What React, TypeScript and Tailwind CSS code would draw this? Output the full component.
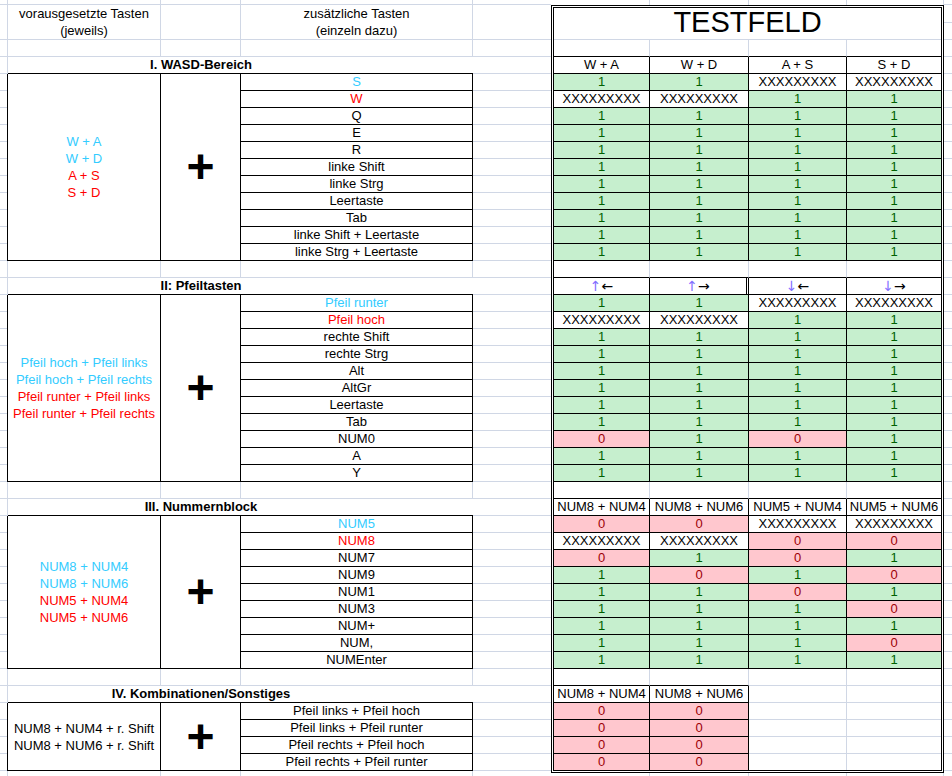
import type { ReactNode } from 'react';

type Tone = 'b' | 'r' | 'k';
type Line = [string, Tone?];

interface Section {
  title: string;
  combos: Line[];
  keys: Line[];
  heads: ReactNode[];
  values: string[];
  double?: number;
}

const tone: Record<Tone, string> = {
  b: 'text-[#33ccff]',
  r: 'text-[#ff0000]',
  k: 'text-black',
};

const fill: Record<string, string> = {
  '1': 'bg-[#c6efce] text-[#006100]',
  '0': 'bg-[#ffc7ce] text-[#9c0006]',
  X: 'bg-white text-black',
};

// spreadsheet lines
const G_R = 'border-r border-r-[#d0d7e5]';
const G_B = 'border-b border-b-[#d0d7e5]';
const K_R = 'border-r border-r-black';
const K_B = 'border-b border-b-black';

const COLS = ['w-[96px]', 'w-[99px]', 'w-[98px]', 'w-[94px]'];

const Arrows = ({ v, h }: { v: string; h: string }) => (
  <span className="font-['DejaVu_Sans',sans-serif] text-[14px]">
    <span className="text-[#8470ff]">{v}</span>
    {h}
  </span>
);

const allOnes = (n: number) => Array.from({ length: n }, () => '1111');

const sections: Section[] = [
  {
    title: 'I. WASD-Bereich',
    combos: [['W + A', 'b'], ['W + D', 'b'], ['A + S', 'r'], ['S + D', 'r']],
    keys: [
      ['S', 'b'], ['W', 'r'], ['Q'], ['E'], ['R'], ['linke Shift'], ['linke Strg'],
      ['Leertaste'], ['Tab'], ['linke Shift + Leertaste'], ['linke Strg + Leertaste'],
    ],
    heads: ['W + A', 'W + D', 'A + S', 'S + D'],
    values: ['11XX', 'XX11', ...allOnes(9)],
  },
  {
    title: 'II: Pfeiltasten',
    combos: [
      ['Pfeil hoch + Pfeil links', 'b'],
      ['Pfeil hoch + Pfeil rechts', 'b'],
      ['Pfeil runter + Pfeil links', 'r'],
      ['Pfeil runter + Pfeil rechts', 'r'],
    ],
    keys: [
      ['Pfeil runter', 'b'], ['Pfeil hoch', 'r'], ['rechte Shift'], ['rechte Strg'], ['Alt'],
      ['AltGr'], ['Leertaste'], ['Tab'], ['NUM0'], ['A'], ['Y'],
    ],
    heads: [
      <Arrows v="↑" h="←" />,
      <Arrows v="↑" h="→" />,
      <Arrows v="↓" h="←" />,
      <Arrows v="↓" h="→" />,
    ],
    values: ['11XX', 'XX11', ...allOnes(6), '0101', '1111', '1111'],
    double: 1,
  },
  {
    title: 'III. Nummernblock',
    combos: [['NUM8 + NUM4', 'b'], ['NUM8 + NUM6', 'b'], ['NUM5 + NUM4', 'r'], ['NUM5 + NUM6', 'r']],
    keys: [
      ['NUM5', 'b'], ['NUM8', 'r'], ['NUM7'], ['NUM9'], ['NUM1'], ['NUM3'], ['NUM+'], ['NUM,'], ['NUMEnter'],
    ],
    heads: ['NUM8 + NUM4', 'NUM8 + NUM6', 'NUM5 + NUM4', 'NUM5 + NUM6'],
    values: ['00XX', 'XX00', '0101', '1010', '1101', '1110', '1111', '1110', '1111'],
  },
  {
    title: 'IV. Kombinationen/Sonstiges',
    combos: [['NUM8 + NUM4 + r. Shift'], ['NUM8 + NUM6 + r. Shift']],
    keys: [
      ['Pfeil links + Pfeil hoch'], ['Pfeil links + Pfeil runter'],
      ['Pfeil rechts + Pfeil hoch'], ['Pfeil rechts + Pfeil runter'],
    ],
    heads: ['NUM8 + NUM4', 'NUM8 + NUM6'],
    values: ['00', '00', '00', '00'],
  },
];

function LeftPlain({ h, bottom = true }: { h: string; bottom?: boolean }) {
  const b = bottom ? G_B : '';
  return (
    <div className={`flex ${h}`}>
      <div className={`w-[8px] ${G_R} ${b}`} />
      <div className={`w-[153px] ${G_R} ${b}`} />
      <div className={`w-[80px] ${G_R} ${b}`} />
      <div className={`w-[232px] ${G_R} ${b}`} />
      <div className={`w-[78px] ${b}`} />
    </div>
  );
}

function BoxPlain({ h }: { h: string }) {
  return (
    <div className={`flex ${h}`}>
      <div className={`w-[99px] ${G_R}`} />
      <div className={`w-[99px] ${G_R}`} />
      <div className={`w-[98px] ${G_R}`} />
      <div className={`w-[97px] ${G_R}`} />
    </div>
  );
}

function LeftSection({ sec }: { sec: Section }) {
  return (
    <>
      <LeftPlain h="h-[17px]" />
      <div className="flex h-[17px]">
        <div className={`w-[8px] ${G_R} ${G_B}`} />
        <div className={`w-[465px] ${K_B}`}>
          <div className="w-[386px] whitespace-nowrap text-center font-bold leading-[16px]">{sec.title}</div>
        </div>
        <div className={`w-[78px] ${G_B}`} />
      </div>
      <div className="flex">
        <div className={`w-[8px] ${K_R}`}>
          {sec.keys.map((_, i) => (
            <div key={i} className={`h-[17px] ${G_B}`} />
          ))}
        </div>
        <div className={`flex w-[153px] flex-col items-center justify-center leading-[17px] ${K_R} ${K_B}`}>
          {sec.combos.map(([t, c = 'k'], i) => (
            <div key={i} className={`whitespace-nowrap ${tone[c]}`}>{t}</div>
          ))}
        </div>
        <div className={`flex w-[80px] items-center justify-center ${K_R} ${K_B}`}>
          <span className="text-[48px] font-bold leading-none">+</span>
        </div>
        <div className="w-[232px]">
          {sec.keys.map(([t, c = 'k'], i) => (
            <div key={i} className={`h-[17px] text-center leading-[16px] ${K_R} ${K_B} ${tone[c]}`}>{t}</div>
          ))}
        </div>
        <div className="w-[78px]">
          {sec.keys.map((_, i) => (
            <div key={i} className={`h-[17px] ${G_B}`} />
          ))}
        </div>
      </div>
    </>
  );
}

function BoxSection({ sec, last }: { sec: Section; last: boolean }) {
  const n = sec.heads.length;
  return (
    <>
      <div className="flex h-[17px]">
        {COLS.map((w, i) => (
          <div key={i} className={`${w} ${i < 3 ? G_R : ''} ${i < n ? K_B : G_B}`} />
        ))}
      </div>
      <div className="flex h-[17px]">
        {COLS.map((w, i) => {
          const head = i < n;
          let right = head ? K_R : G_R;
          if (sec.double === i) right = 'border-r-[3px] border-double border-r-black';
          if (i === 3) right = '';
          return (
            <div key={i} className={`${w} ${right} ${head ? K_B : G_B} whitespace-nowrap text-center leading-[16px]`}>
              {sec.heads[i]}
            </div>
          );
        })}
      </div>
      {sec.values.map((row, r) => {
        const end = last && r === sec.values.length - 1;
        return (
          <div key={r} className={`flex ${end ? 'h-[16px]' : 'h-[17px]'}`}>
            {COLS.map((w, i) => {
              const v = row[i];
              const right = i === 3 ? '' : v ? K_R : G_R;
              const bottom = end ? '' : v ? K_B : G_B;
              return (
                <div key={i} className={`${w} ${right} ${bottom} ${v ? fill[v] : ''} text-center leading-[16px]`}>
                  {v === 'X' ? 'XXXXXXXXX' : v}
                </div>
              );
            })}
          </div>
        );
      })}
    </>
  );
}

export default function App() {
  return (
    <div className="flex h-[776px] w-[952px] overflow-hidden bg-white font-['Liberation_Sans',Arial,sans-serif] text-[13px] text-black">
      <div className="w-[551px] shrink-0">
        <LeftPlain h="h-[5px]" />
        <div className="flex h-[35px]">
          <div className={`w-[8px] ${G_R} ${G_B}`} />
          <div className={`w-[153px] text-center leading-[17px] ${G_R} ${G_B}`}>
            vorausgesetzte Tasten
            <br />
            (jeweils)
          </div>
          <div className={`w-[80px] ${G_R} ${G_B}`} />
          <div className={`w-[232px] text-center leading-[17px] ${G_R} ${G_B}`}>
            zusätzliche Tasten
            <br />
            (einzeln dazu)
          </div>
          <div className={`w-[78px] ${G_B}`} />
        </div>
        {sections.map((s) => (
          <LeftSection key={s.title} sec={s} />
        ))}
        <LeftPlain h="h-[6px]" bottom={false} />
      </div>

      <div className="w-[393px] shrink-0">
        <BoxPlain h="h-[5px]" />
        <div className="w-[393px] border-[3px] border-double border-black">
          <div className={`flex h-[32px] items-center justify-center ${G_B}`}>
            <span className="pb-[3px] text-[29px] leading-none">TESTFELD</span>
          </div>
          {sections.map((s, i) => (
            <BoxSection key={s.title} sec={s} last={i === sections.length - 1} />
          ))}
        </div>
        <BoxPlain h="h-[4px]" />
      </div>

      <div className="w-[8px] shrink-0">
        <div className={`h-[5px] ${G_B}`} />
        <div className={`h-[18px] ${G_B}`} />
        {Array.from({ length: 45 }, (_, i) => (
          <div key={i} className={`h-[17px] ${G_B}`} />
        ))}
      </div>
    </div>
  );
}
